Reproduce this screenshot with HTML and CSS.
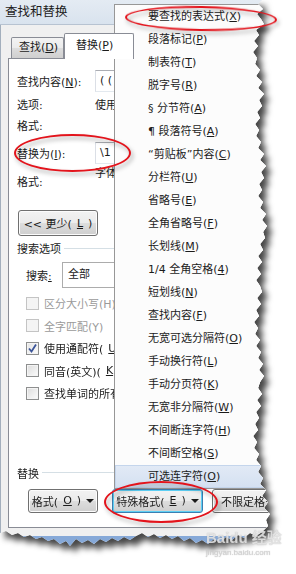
FILE: index.html
```html
<!DOCTYPE html>
<html lang="zh-CN">
<head>
    <meta charset="UTF-8">
    <title>查找和替换</title>
    <link rel="stylesheet" href="styles.css">
</head>
<body>
<div class="page">

    <!-- torn screenshot -->
    <div class="paper">
        <div class="shot">
            <div class="window">
                <div class="titlebar">查找和替换</div>
                <div class="frame">
                    <div class="frame-edge"></div>
                    <div class="client">
                        <div class="tabs">
                            <div class="tab">查找(<u>D</u>)</div>
                            <div class="tab active">替换(<u>P</u>)</div>
                        </div>
                        <div class="panel">
                            <div class="row row-input">
                                <span class="label">查找内容(<u>N</u>):</span>
                                <span class="field">( (</span>
                            </div>
                            <div class="row row-text">
                                <span class="label">选项:</span>
                                <span class="value">使用通配符</span>
                            </div>
                            <div class="row row-text row-gap">
                                <span class="label">格式:</span>
                            </div>
                            <div class="row row-input row-replace">
                                <span class="label">替换为(<u>I</u>):</span>
                                <span class="field">\1</span>
                            </div>
                            <div class="row row-format">
                                <span class="label">格式:</span>
                                <span class="value">字体: (中文) 宋体</span>
                            </div>

                            <button class="btn btn-less">&lt;&lt; 更少(<u>L</u>)</button>

                            <div class="group">搜索选项</div>
                            <div class="search-row">
                                <span class="search-label">搜索<u>:</u></span>
                                <span class="select">全部</span>
                            </div>

                            <ul class="checks">
                                <li class="disabled"><span class="box"></span>区分大小写(H)</li>
                                <li class="disabled"><span class="box"></span>全字匹配(Y)</li>
                                <li><span class="box checked"><svg width="11" height="11" viewBox="0 0 11 11"><path d="M2 5.5 L4.5 8.5 L9 1.5" fill="none" stroke="#3b5599" stroke-width="1.8"/></svg></span>使用通配符(<u>U</u>)</li>
                                <li><span class="box"></span>同音(英文)(<u>K</u>)</li>
                                <li><span class="box"></span>查找单词的所有形式(英文)(<u>W</u>)</li>
                            </ul>

                            <div class="group group-replace">替换</div>
                            <div class="buttons">
                                <button class="btn btn-fmt">格式(<u>O</u>) <span class="arrow"></span></button>
                                <button class="btn btn-special">特殊格式(<u>E</u>) <span class="arrow"></span></button>
                                <button class="btn btn-none">不限定格式(<u>T</u>)</button>
                            </div>
                        </div>
                    </div>
                </div>
            </div>
            <div class="taskbar"></div>

            <!-- popup menu -->
            <ul class="menu">
                <li>要查找的表达式(<u>X</u>)</li>
                <li>段落标记(<u>P</u>)</li>
                <li>制表符(<u>T</u>)</li>
                <li>脱字号(<u>R</u>)</li>
                <li>§ 分节符(<u>A</u>)</li>
                <li>¶ 段落符号(<u>A</u>)</li>
                <li>“剪贴板”内容(<u>C</u>)</li>
                <li>分栏符(<u>U</u>)</li>
                <li>省略号(<u>E</u>)</li>
                <li>全角省略号(<u>F</u>)</li>
                <li>长划线(<u>M</u>)</li>
                <li>1/4 全角空格(<u>4</u>)</li>
                <li>短划线(<u>N</u>)</li>
                <li>查找内容(<u>F</u>)</li>
                <li>无宽可选分隔符(<u>O</u>)</li>
                <li>手动换行符(<u>L</u>)</li>
                <li>手动分页符(<u>K</u>)</li>
                <li>无宽非分隔符(<u>W</u>)</li>
                <li>不间断连字符(<u>H</u>)</li>
                <li>不间断空格(<u>S</u>)</li>
                <li class="hover">可选连字符(<u>O</u>)</li>
            </ul>
        </div>
    </div>

    <!-- red annotation rings -->
    <div class="ring ring-menu"></div>
    <div class="ring ring-label"></div>
    <div class="ring ring-button"></div>

    <div class="watermark">
        <div class="wm-logo">Baidu 经验</div>
        <div class="wm-url">jingyan.baidu.com</div>
    </div>
</div>
</body>
</html>
```

FILE: styles.css
```css
* {
    box-sizing: border-box;
}

body {
    margin: 0;
    width: 296px;
    height: 574px;
    overflow: hidden;
    background: #fff;
    font-family: "DejaVu Sans", "Noto Sans CJK SC", sans-serif;
    font-size: 11px;
    color: #1b1b1b;
}

u {
    text-underline-offset: 1px;
}

.page {
    position: relative;
    width: 296px;
    height: 574px;
}

/* torn paper edge + shadow */
.paper {
    filter: drop-shadow(5px 6px 3px rgba(0, 0, 0, 0.72));
}

.shot {
    position: relative;
    width: 292px;
    height: 550px;
    overflow: hidden;
    background: #f0f0f0;
    clip-path: polygon(0 0, 262px 0, 258px 4px, 263px 9px, 257px 14px, 261px 19px, 264px 24px, 256px 30px, 259px 35px, 254px 41px, 258px 46px, 253px 52px, 257px 58px, 255px 64px, 260px 70px, 256px 76px, 262px 82px, 258px 88px, 264px 94px, 259px 100px, 262px 106px, 257px 112px, 260px 118px, 255px 124px, 259px 130px, 256px 136px, 261px 142px, 258px 148px, 264px 154px, 260px 160px, 266px 166px, 261px 172px, 264px 178px, 259px 184px, 262px 190px, 258px 196px, 263px 202px, 260px 208px, 266px 214px, 262px 220px, 267px 226px, 263px 232px, 265px 238px, 260px 244px, 263px 250px, 258px 256px, 262px 262px, 257px 268px, 261px 274px, 256px 280px, 260px 286px, 262px 292px, 257px 298px, 261px 304px, 256px 310px, 259px 316px, 254px 322px, 258px 328px, 255px 334px, 260px 340px, 256px 346px, 261px 352px, 258px 358px, 263px 364px, 259px 370px, 264px 376px, 260px 382px, 258px 388px, 262px 394px, 257px 400px, 261px 406px, 256px 412px, 259px 418px, 255px 424px, 258px 430px, 253px 436px, 257px 442px, 254px 448px, 259px 454px, 256px 460px, 261px 466px, 258px 472px, 263px 478px, 260px 484px, 266px 490px, 262px 496px, 268px 502px, 264px 508px, 270px 514px, 266px 520px, 268px 526px, 262px 532px, 256px 536px, 250px 533px, 244px 538px, 238px 535px, 232px 540px, 226px 537px, 220px 542px, 214px 539px, 208px 544px, 202px 540px, 196px 543px, 190px 538px, 184px 541px, 178px 536px, 172px 539px, 166px 535px, 160px 538px, 154px 534px, 148px 537px, 142px 533px, 136px 536px, 130px 540px, 124px 537px, 118px 541px, 112px 538px, 106px 542px, 100px 539px, 94px 544px, 88px 540px, 82px 543px, 76px 539px, 70px 546px, 66px 541px, 60px 544px, 54px 539px, 48px 541px, 42px 537px, 36px 539px, 30px 535px, 24px 537px, 18px 533px, 12px 535px, 6px 531px, 0 533px);
}

/* window */
.window {
    display: flex;
    flex-direction: column;
    height: 536px;
}

.titlebar {
    height: 25px;
    padding-left: 5px;
    line-height: 24px;
    font-size: 12.5px;
    color: #1e1e1e;
    background: linear-gradient(#e4ebf3, #d9e3ee);
    border-bottom: 1px solid #b7c3d1;
}

.frame {
    flex: 1;
    display: flex;
}

.frame-edge {
    width: 4px;
    background:
        linear-gradient(to right, transparent 2px, #d5dfea 2px),
        linear-gradient(#c3d1e2, #4d72aa 90px, #4b6fa8);
}

.client {
    flex: 1;
    padding: 8px 0 0 7px;
    background: #f0f0f0;
    border-left: 1px solid #a3afbd;
}

/* tabs */
.tabs {
    display: flex;
    align-items: flex-end;
    height: 25px;
    margin-left: 3px;
}

.tab {
    height: 21px;
    width: 53px;
    padding-left: 7px;
    line-height: 20px;
    white-space: nowrap;
    border: 1px solid #898c95;
    border-bottom: none;
    border-radius: 2px 2px 0 0;
    background: linear-gradient(#f3f3f3, #ebebeb 50%, #dddddd 51%, #cfcfcf);
}

.tab.active {
    position: relative;
    z-index: 1;
    height: 26px;
    width: 70px;
    margin-bottom: -1px;
    padding-left: 11px;
    line-height: 24px;
    background: #fff;
}

/* panel */
.panel {
    height: 470px;
    padding-left: 8px;
    background: #fff;
    border: 1px solid #898c95;
}

.row {
    display: flex;
    align-items: center;
    white-space: nowrap;
}

.label {
    width: 78px;
    flex: none;
}

.row-input {
    height: 22px;
    margin-top: 11px;
}

.row-replace {
    margin-top: 7px;
}

.field {
    width: 200px;
    height: 22px;
    padding-left: 4px;
    line-height: 20px;
    border: 1px solid #e3e9ef;
    border-top-color: #abadb3;
    border-left-color: #dbdfe6;
}

.row-text {
    height: 20px;
    margin-top: 2px;
}

.row-gap {
    margin-top: 1px;
}

.row-format {
    align-items: flex-start;
    height: 32px;
    margin-top: 2px;
    line-height: 16px;
}

.row-format .label {
    padding-top: 9px;
}

/* buttons */
.btn {
    display: flex;
    align-items: center;
    justify-content: center;
    gap: 5px;
    height: 24px;
    padding: 0;
    font: inherit;
    white-space: nowrap;
    color: #1b1b1b;
    border: 1px solid #707070;
    border-radius: 3px;
    background: linear-gradient(#f2f2f2, #ebebeb 50%, #dddddd 51%, #cfcfcf);
    box-shadow: inset 0 0 0 1px #fcfcfc;
}

.btn-less {
    width: 80px;
    height: 26px;
    margin: 12px 0 0 1px;
}

.arrow {
    width: 0;
    height: 0;
    border-left: 4px solid transparent;
    border-right: 4px solid transparent;
    border-top: 4px solid #1b1b1b;
}

.group {
    display: flex;
    align-items: center;
    height: 16px;
    margin-top: 4px;
}

.group::after {
    content: "";
    flex: 1;
    margin-left: 3px;
    border-top: 1px solid #d5dfe5;
}

.group-replace {
    margin-top: 60px;
}

.search-row {
    display: flex;
    align-items: center;
    height: 26px;
    margin-top: 6px;
    padding-left: 9px;
}

.search-label {
    width: 36px;
}

.select {
    width: 180px;
    height: 26px;
    padding-left: 5px;
    line-height: 24px;
    border: 1px solid #acacac;
}

/* checkboxes */
.checks {
    list-style: none;
    margin: 4px 0 0 9px;
    padding: 0;
}

.checks li {
    display: flex;
    align-items: center;
    gap: 5px;
    height: 22.5px;
    white-space: nowrap;
}

.box {
    width: 13px;
    height: 13px;
    flex: none;
    border: 1px solid #8e8f8f;
    background: linear-gradient(135deg, #dcdcdc, #fcfcfc);
    box-shadow: inset 0 0 0 1px #f4f4f4;
}

.box.checked {
    display: flex;
    align-items: center;
    justify-content: center;
    background: linear-gradient(135deg, #e4e4e4, #fbfbfb);
}

.checks .disabled {
    color: #9a9a9a;
}

.disabled .box {
    border-color: #c4c4c4;
    background: #f4f4f4;
    box-shadow: none;
}

.buttons {
    display: flex;
    margin: 8px 0 0 11px;
}

.btn-fmt {
    width: 70px;
}

.btn-special {
    width: 91px;
    margin-left: 14px;
    border-color: #3c7fb1;
    box-shadow: inset 0 0 0 1px #5ed0f5;
}

.btn-none {
    width: 84px;
    margin-left: 9px;
    justify-content: flex-start;
    padding-left: 8px;
}

.taskbar {
    height: 14px;
    background: #86a9d8;
}

/* popup menu */
.menu {
    position: absolute;
    left: 114px;
    top: 4px;
    width: 172px;
    margin: 0;
    padding: 0;
    list-style: none;
    background: #fcfcfc;
    border: 1px solid #979797;
}

.menu li {
    height: 23px;
    padding-left: 33px;
    line-height: 23px;
    white-space: nowrap;
}

.menu .hover {
    background: linear-gradient(#e2eaf6, #d4e0f1);
    box-shadow: inset 0 0 0 1px #c4d5ec;
}

/* annotations */
.ring {
    position: absolute;
    border: 2px solid #e3141c;
    border-radius: 50%;
    filter: drop-shadow(2px 3px 2px rgba(0, 0, 0, 0.35));
}

.ring-menu {
    left: 125px;
    top: 6px;
    width: 152px;
    height: 25px;
    transform: rotate(1deg);
}

.ring-label {
    left: 14px;
    top: 134px;
    width: 117px;
    height: 38px;
}

.ring-button {
    left: 104px;
    top: 481px;
    width: 114px;
    height: 42px;
}

.watermark {
    position: absolute;
    left: 206px;
    top: 528px;
    color: rgba(238, 238, 238, 0.8);
    text-shadow: 0 0 1px rgba(130, 130, 130, 0.6);
}

.wm-logo {
    font-family: "Liberation Sans", "Noto Sans CJK SC", sans-serif;
    font-size: 15px;
    font-weight: bold;
    line-height: 20px;
}

.wm-url {
    font-family: "Liberation Sans", sans-serif;
    font-size: 8px;
    line-height: 10px;
    color: rgba(215, 215, 215, 0.85);
}
```
